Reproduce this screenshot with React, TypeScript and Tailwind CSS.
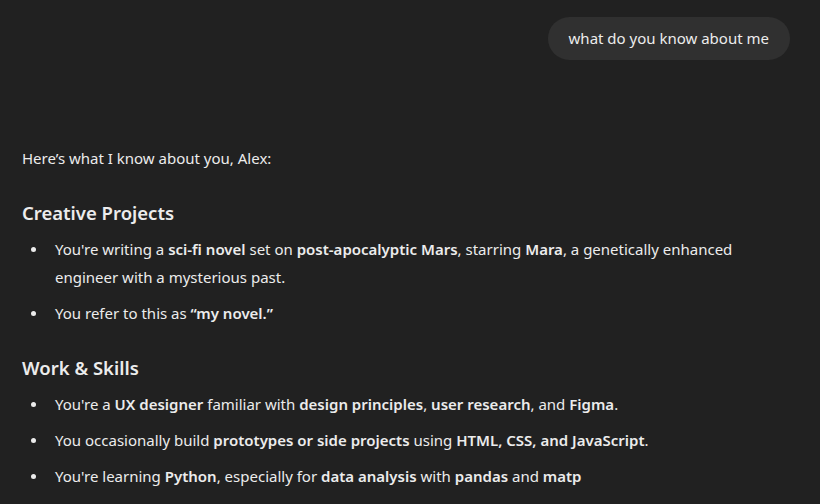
function Bullet() {
  return (
    <span className="w-[33px] shrink-0 flex items-start pt-[12px] pl-[9px]">
      <span className="block w-[5px] h-[5px] rounded-full bg-[#ececec]" />
    </span>
  );
}

export default function App() {
  return (
    <div
      className="w-[820px] h-[504px] overflow-hidden bg-[#212121] text-[#ececec]"
      style={{ fontFamily: '"Noto Sans", "Open Sans", sans-serif' }}
    >
      {/* user message */}
      <div className="flex justify-end pt-[17px] pr-[30px]">
        <div className="rounded-full bg-[#303030] px-[21px] h-[43px] flex items-center text-[15px] text-[#ececec]">
          what do you know about me
        </div>
      </div>

      {/* assistant reply */}
      <div className="pl-[22px] pr-[52px] pt-[84px] text-[15px]">
        <p className="leading-[28px]">Here’s what I know about you, Alex:</p>

        <h3 className="mt-[26px] text-[18.5px] font-semibold leading-[30px]">Creative Projects</h3>
        <ul className="mt-[7px]">
          <li className="flex leading-[28px]">
            <Bullet />
            <span>
              You're writing a <b className="font-semibold">sci-fi novel</b> set on{' '}
              <b className="font-semibold">post-apocalyptic Mars</b>, starring{' '}
              <b className="font-semibold">Mara</b>, a genetically enhanced engineer with a mysterious past.
            </span>
          </li>
          <li className="flex leading-[28px] mt-[8px]">
            <Bullet />
            <span>
              You refer to this as <b className="font-semibold">“my novel.”</b>
            </span>
          </li>
        </ul>

        <h3 className="mt-[26px] text-[18.5px] font-semibold leading-[30px]">Work &amp; Skills</h3>
        <ul className="mt-[7px]">
          <li className="flex leading-[28px]">
            <Bullet />
            <span>
              You're a <b className="font-semibold">UX designer</b> familiar with{' '}
              <b className="font-semibold">design principles</b>, <b className="font-semibold">user research</b>, and{' '}
              <b className="font-semibold">Figma</b>.
            </span>
          </li>
          <li className="flex leading-[28px] mt-[8px]">
            <Bullet />
            <span>
              You occasionally build <b className="font-semibold">prototypes or side projects</b> using{' '}
              <b className="font-semibold">HTML, CSS, and JavaScript</b>.
            </span>
          </li>
          <li className="flex leading-[28px] mt-[8px]">
            <Bullet />
            <span>
              You're learning <b className="font-semibold">Python</b>, especially for{' '}
              <b className="font-semibold">data analysis</b> with <b className="font-semibold">pandas</b> and{' '}
              <b className="font-semibold">matp</b>
            </span>
          </li>
        </ul>
      </div>
    </div>
  );
}
